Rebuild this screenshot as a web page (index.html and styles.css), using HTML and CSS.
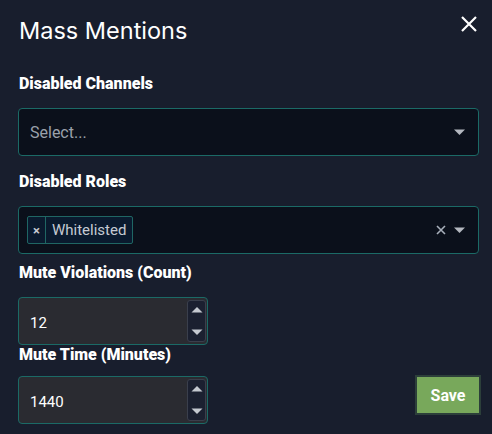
FILE: index.html
```
<!DOCTYPE html>
<html>
<head>
<meta charset="utf-8">
<link rel="stylesheet" href="styles.css">
</head>
<body>
<div class="modal">
  <div class="header">
    <h1 class="title">Mass Mentions</h1>
    <button class="close" aria-label="Close">
      <svg width="18" height="18" viewBox="0 0 18 18"><path d="M2 2L16 16M16 2L2 16" stroke="#fff" stroke-width="2.2" fill="none"/></svg>
    </button>
  </div>
  <div class="field">
    <label class="label">Disabled Channels</label>
    <div class="select">
      <div class="value placeholder">Select...</div>
      <div class="indicators">
        <svg class="arrow" width="12" height="8" viewBox="0 0 12 8"><path d="M0 1.5h11L5.5 7z" fill="#b4b8c0"/></svg>
      </div>
    </div>
  </div>
  <div class="field">
    <label class="label">Disabled Roles</label>
    <div class="select multi">
      <div class="value">
        <div class="chip"><span class="chip-x">×</span><span class="chip-label">Whitelisted</span></div>
      </div>
      <div class="indicators">
        <svg class="clear" width="10" height="10" viewBox="0 0 10 10"><path d="M1 1L9 9M9 1L1 9" stroke="#a8afbb" stroke-width="1.6" fill="none"/></svg>
        <svg class="arrow" width="12" height="8" viewBox="0 0 12 8"><path d="M0 1.5h11L5.5 7z" fill="#b4b8c0"/></svg>
      </div>
    </div>
  </div>
  <div class="field">
    <label class="label">Mute Violations (Count)</label>
    <div class="number">
      <span class="num-value">12</span>
      <div class="spinner">
        <svg width="12" height="8" viewBox="0 0 12 8"><path d="M0.5 6.5h11L6 1z" fill="#c4c8cf"/></svg>
        <svg width="12" height="8" viewBox="0 0 12 8"><path d="M0.5 1.5h11L6 7z" fill="#c4c8cf"/></svg>
      </div>
    </div>
  </div>
  <div class="row">
    <div class="field">
      <label class="label short">Mute Time (Minutes)</label>
      <div class="number">
        <span class="num-value">1440</span>
        <div class="spinner">
          <svg width="12" height="8" viewBox="0 0 12 8"><path d="M0.5 6.5h11L6 1z" fill="#c4c8cf"/></svg>
          <svg width="12" height="8" viewBox="0 0 12 8"><path d="M0.5 1.5h11L6 7z" fill="#c4c8cf"/></svg>
        </div>
      </div>
    </div>
    <button class="save">Save</button>
  </div>
</div>
</body>
</html>
```
FILE: styles.css
```
* { box-sizing: border-box; }
html, body { margin: 0; padding: 0; }
body {
  background: #181e2d;
  width: 492px;
  height: 434px;
  overflow: hidden;
  font-family: Roboto, "Liberation Sans", sans-serif;
  color: #fff;
}
.modal {
  padding: 12px 13px 0 18px;
}
.header {
  display: flex;
  justify-content: space-between;
  align-items: flex-start;
  height: 62px;
  padding-left: 1px;
}
.title {
  margin: 5px 0 0 0;
  font-family: Inter, Roboto, sans-serif;
  font-weight: 400;
  font-size: 23.5px;
  line-height: 28px;
  letter-spacing: 0;
}
.close {
  background: none;
  border: 0;
  padding: 0;
  margin: 3px 1px 0 0;
  width: 18px;
  height: 18px;
  display: flex;
}
.field {
  display: flex;
  flex-direction: column;
}
.label {
  font-weight: 900;
  font-size: 16px;
  line-height: 20px;
  padding-left: 1px;
  margin-bottom: 14px;
  letter-spacing: 0;
}
.label.short { margin-bottom: 11px; }
.select {
  height: 48px;
  background: #0b101b;
  border: 1px solid #1b6a66;
  border-radius: 4px;
  display: flex;
  align-items: center;
  margin-bottom: 16px;
}
.select.multi { margin-bottom: 9px; }
.value {
  flex: 1;
  padding-left: 11px;
  display: flex;
  align-items: center;
}
.placeholder {
  color: #9ba1ab;
  font-size: 16px;
}
.indicators {
  display: flex;
  align-items: center;
  gap: 8px;
  padding-right: 12px;
}
.chip {
  display: flex;
  height: 28px;
  border: 1px solid #1f6664;
  border-radius: 2px;
  background: #0a1a2e;
  margin-left: -3px;
}
.chip-x {
  width: 18px;
  border-right: 1px solid #1f6664;
  display: flex;
  align-items: center;
  justify-content: center;
  color: #c6cad2;
  font-size: 13px;
  font-weight: 700;
}
.chip-label {
  padding: 0 6px 0 6px;
  display: flex;
  align-items: center;
  color: #c5cad3;
  font-size: 15px;
}
.number {
  width: 190px;
  height: 48px;
  background: #2a2b31;
  border: 1px solid #1b6a66;
  border-radius: 4px;
  display: flex;
  align-items: center;
  justify-content: space-between;
  padding: 2px 1px 2px 11px;
}
.num-value {
  font-size: 15px;
  color: #fff;
  margin-top: 4px;
}
.spinner {
  width: 19px;
  height: 100%;
  background: #1b2030;
  border: 1px solid #3a3f4c;
  border-radius: 3px;
  display: flex;
  flex-direction: column;
  align-items: center;
  justify-content: space-between;
  padding: 5px 0 5px;
}
.row {
  display: flex;
  justify-content: space-between;
  align-items: flex-start;
}
.save {
  margin-top: 30px;
  width: 66px;
  height: 40px;
  background: #78a85b;
  border: 2px solid #2c3f3a;
  color: #fff;
  font-family: Roboto, sans-serif;
  font-size: 16px;
  font-weight: 700;
  padding: 0;
  margin-right: -2px;
}
```
